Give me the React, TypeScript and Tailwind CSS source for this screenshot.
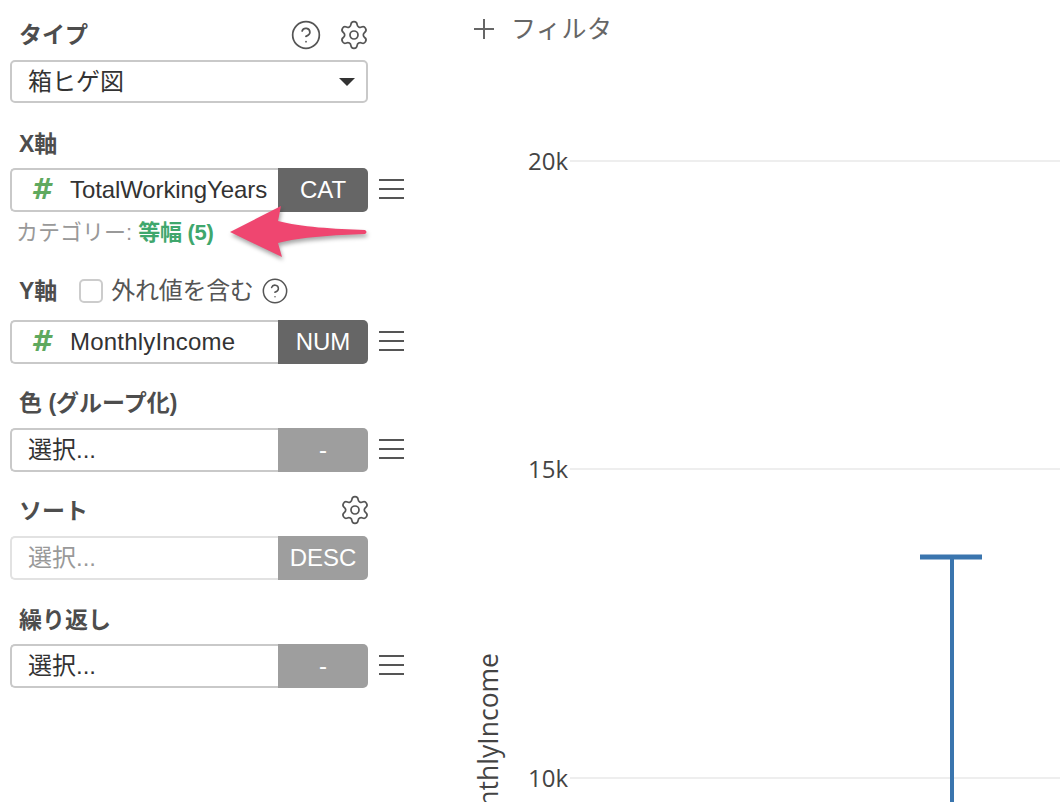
import React from 'react';
import { CircleHelp, Settings } from 'lucide-react';

const FONT = "font-['Liberation_Sans','Noto_Sans_CJK_JP',sans-serif]";

interface FieldProps {
  value: string;
  badge: string;
  hash?: boolean;
  active?: boolean;
  muted?: boolean;
  menu?: boolean;
  valueClass?: string;
}

const MenuLines: React.FC = () => (
  <svg width="25" height="22" viewBox="0 0 25 22" className="ml-[11px] -mt-[3px]">
    <path d="M0 2H25M0 11H25M0 20H25" stroke="#555555" strokeWidth="1.8" />
  </svg>
);

const Field: React.FC<FieldProps> = ({ value, badge, hash, active, muted, menu = true, valueClass = '' }) => (
  <div className="flex items-center">
    <div
      className={`flex h-[44px] w-[268px] items-center rounded-l-[5px] border-2 border-r-0 bg-white ${
        muted ? 'border-[#e2e2e2] text-[#999]' : 'border-[#c9c9c9] text-[#333]'
      } ${hash ? 'pl-[19px]' : 'pl-[16px]'}`}
    >
      {hash && (
        <span className="w-[39px] font-['DejaVu_Sans',sans-serif] text-[28px] leading-[30px] font-bold italic text-[#5fa95f]">#</span>
      )}
      <span className={`text-[24px] whitespace-nowrap ${valueClass}`}>{value}</span>
    </div>
    <div
      className={`flex h-[44px] w-[90px] items-center justify-center rounded-r-[5px] text-[24px] text-white ${
        active ? 'bg-[#666]' : 'bg-[#9e9e9e]'
      }`}
    >
      {badge}
    </div>
    {menu && <MenuLines />}
  </div>
);

const Label: React.FC<{ children: React.ReactNode }> = ({ children }) => (
  <span className="text-[23px] font-bold text-[#4d4d4d]">{children}</span>
);

const Chart: React.FC = () => (
  <svg className="absolute inset-0 h-full w-full" viewBox="0 0 620 802">
    <g stroke="#eeeeee" strokeWidth="2">
      <line x1="130" y1="161" x2="620" y2="161" />
      <line x1="130" y1="469" x2="620" y2="469" />
      <line x1="130" y1="778" x2="620" y2="778" />
    </g>
    <g fill="#444444" fontSize="24" textAnchor="end" fontFamily="'Open Sans', sans-serif">
      <text x="128" y="170">20k</text>
      <text x="128" y="478">15k</text>
      <text x="128" y="787">10k</text>
    </g>
    <text
      transform="translate(58 653) rotate(-90)"
      textAnchor="end"
      fill="#444444"
      fontSize="26.5"
      fontFamily="'Open Sans', sans-serif"
    >
      MonthlyIncome
    </text>
    <g stroke="#3a75ae">
      <line x1="480" y1="557" x2="542" y2="557" strokeWidth="5" />
      <line x1="512" y1="557" x2="512" y2="802" strokeWidth="4" />
    </g>
  </svg>
);

export default function App() {
  return (
    <div className={`flex h-[802px] w-[1060px] overflow-hidden bg-white ${FONT}`}>
      <aside className="relative w-[440px] shrink-0 pl-[10px]">
        {/* Type */}
        <div className="mt-[18px] flex h-[34px] w-[358px] items-center justify-between pl-[9px]">
          <Label>タイプ</Label>
          <div className="-mr-[2px] flex items-center gap-[16px] text-[#555]">
            <CircleHelp className="h-[32px] w-[32px]" strokeWidth={1.3} />
            <Settings className="h-[32px] w-[32px]" strokeWidth={1.3} />
          </div>
        </div>
        <div className="mt-[8px] flex h-[43px] w-[358px] items-center justify-between rounded-[5px] border-2 border-[#c9c9c9] pl-[16px] pr-[11px] text-[24px] text-[#333]">
          <span>箱ヒゲ図</span>
          <span className="h-0 w-0 border-x-[8px] border-t-[8px] border-x-transparent border-t-[#333]" />
        </div>

        {/* X axis */}
        <div className="mt-[24px] flex h-[34px] items-center pl-[9px]">
          <Label>X軸</Label>
        </div>
        <div className="mt-[7px]">
          <Field value="TotalWorkingYears" badge="CAT" hash active valueClass="tracking-[-0.1px]" />
        </div>
        <div className="mt-[7px] pl-[6px] text-[22px] leading-[28px] text-[#999]">
          カテゴリー: <span className="font-bold tracking-[-0.3px] text-[#3fa76d]">等幅 (5)</span>
        </div>

        {/* Y axis */}
        <div className="mt-[27px] flex h-[34px] items-center pl-[9px]">
          <Label>Y軸</Label>
          <span className="ml-[22px] h-[24px] w-[24px] rounded-[5px] border-2 border-[#cccccc]" />
          <span className="ml-[8px] text-[24px] tracking-[-0.3px] text-[#555]">外れ値を含む</span>
          <CircleHelp className="ml-[7px] h-[28px] w-[28px] text-[#555]" strokeWidth={1.3} />
        </div>
        <div className="mt-[12px]">
          <Field value="MonthlyIncome" badge="NUM" hash active valueClass="tracking-[0.2px]" />
        </div>

        {/* Color */}
        <div className="mt-[22px] flex h-[34px] items-center pl-[9px]">
          <Label>色 (グループ化)</Label>
        </div>
        <div className="mt-[8px]">
          <Field value="選択..." badge="-" />
        </div>

        {/* Sort */}
        <div className="mt-[22px] flex h-[34px] w-[361px] items-center justify-between pl-[9px]">
          <Label>ソート</Label>
          <Settings className="-mt-[3px] h-[32px] w-[32px] text-[#555]" strokeWidth={1.3} />
        </div>
        <div className="mt-[8px]">
          <Field value="選択..." badge="DESC" muted menu={false} />
        </div>

        {/* Repeat */}
        <div className="mt-[23px] flex h-[34px] items-center pl-[9px]">
          <Label>繰り返し</Label>
        </div>
        <div className="mt-[7px]">
          <Field value="選択..." badge="-" />
        </div>

        {/* Annotation arrow */}
        <svg
          className="absolute left-[225px] top-[200px] drop-shadow-[1px_3px_2px_rgba(0,0,0,0.35)]"
          width="150"
          height="65"
          viewBox="0 0 150 65"
        >
          <path
            d="M5 32 L56 6 L53 21 C75 27 110 29 140 30 Q143 32 140 34 C110 35 75 37 53 43 L57 57 Z"
            fill="#ef4670"
          />
        </svg>
      </aside>

      <main className="relative flex-1">
        <Chart />
        <div className="relative mt-[15px] flex items-center pl-[33px] text-[25px] leading-[28px] tracking-[0.5px] text-[#666]">
          <svg width="22" height="22" viewBox="0 0 22 22" className="mr-[16px]">
            <path d="M11 1V21M1 11H21" stroke="#666666" strokeWidth="2" />
          </svg>
          <span>フィルタ</span>
        </div>
      </main>
    </div>
  );
}
